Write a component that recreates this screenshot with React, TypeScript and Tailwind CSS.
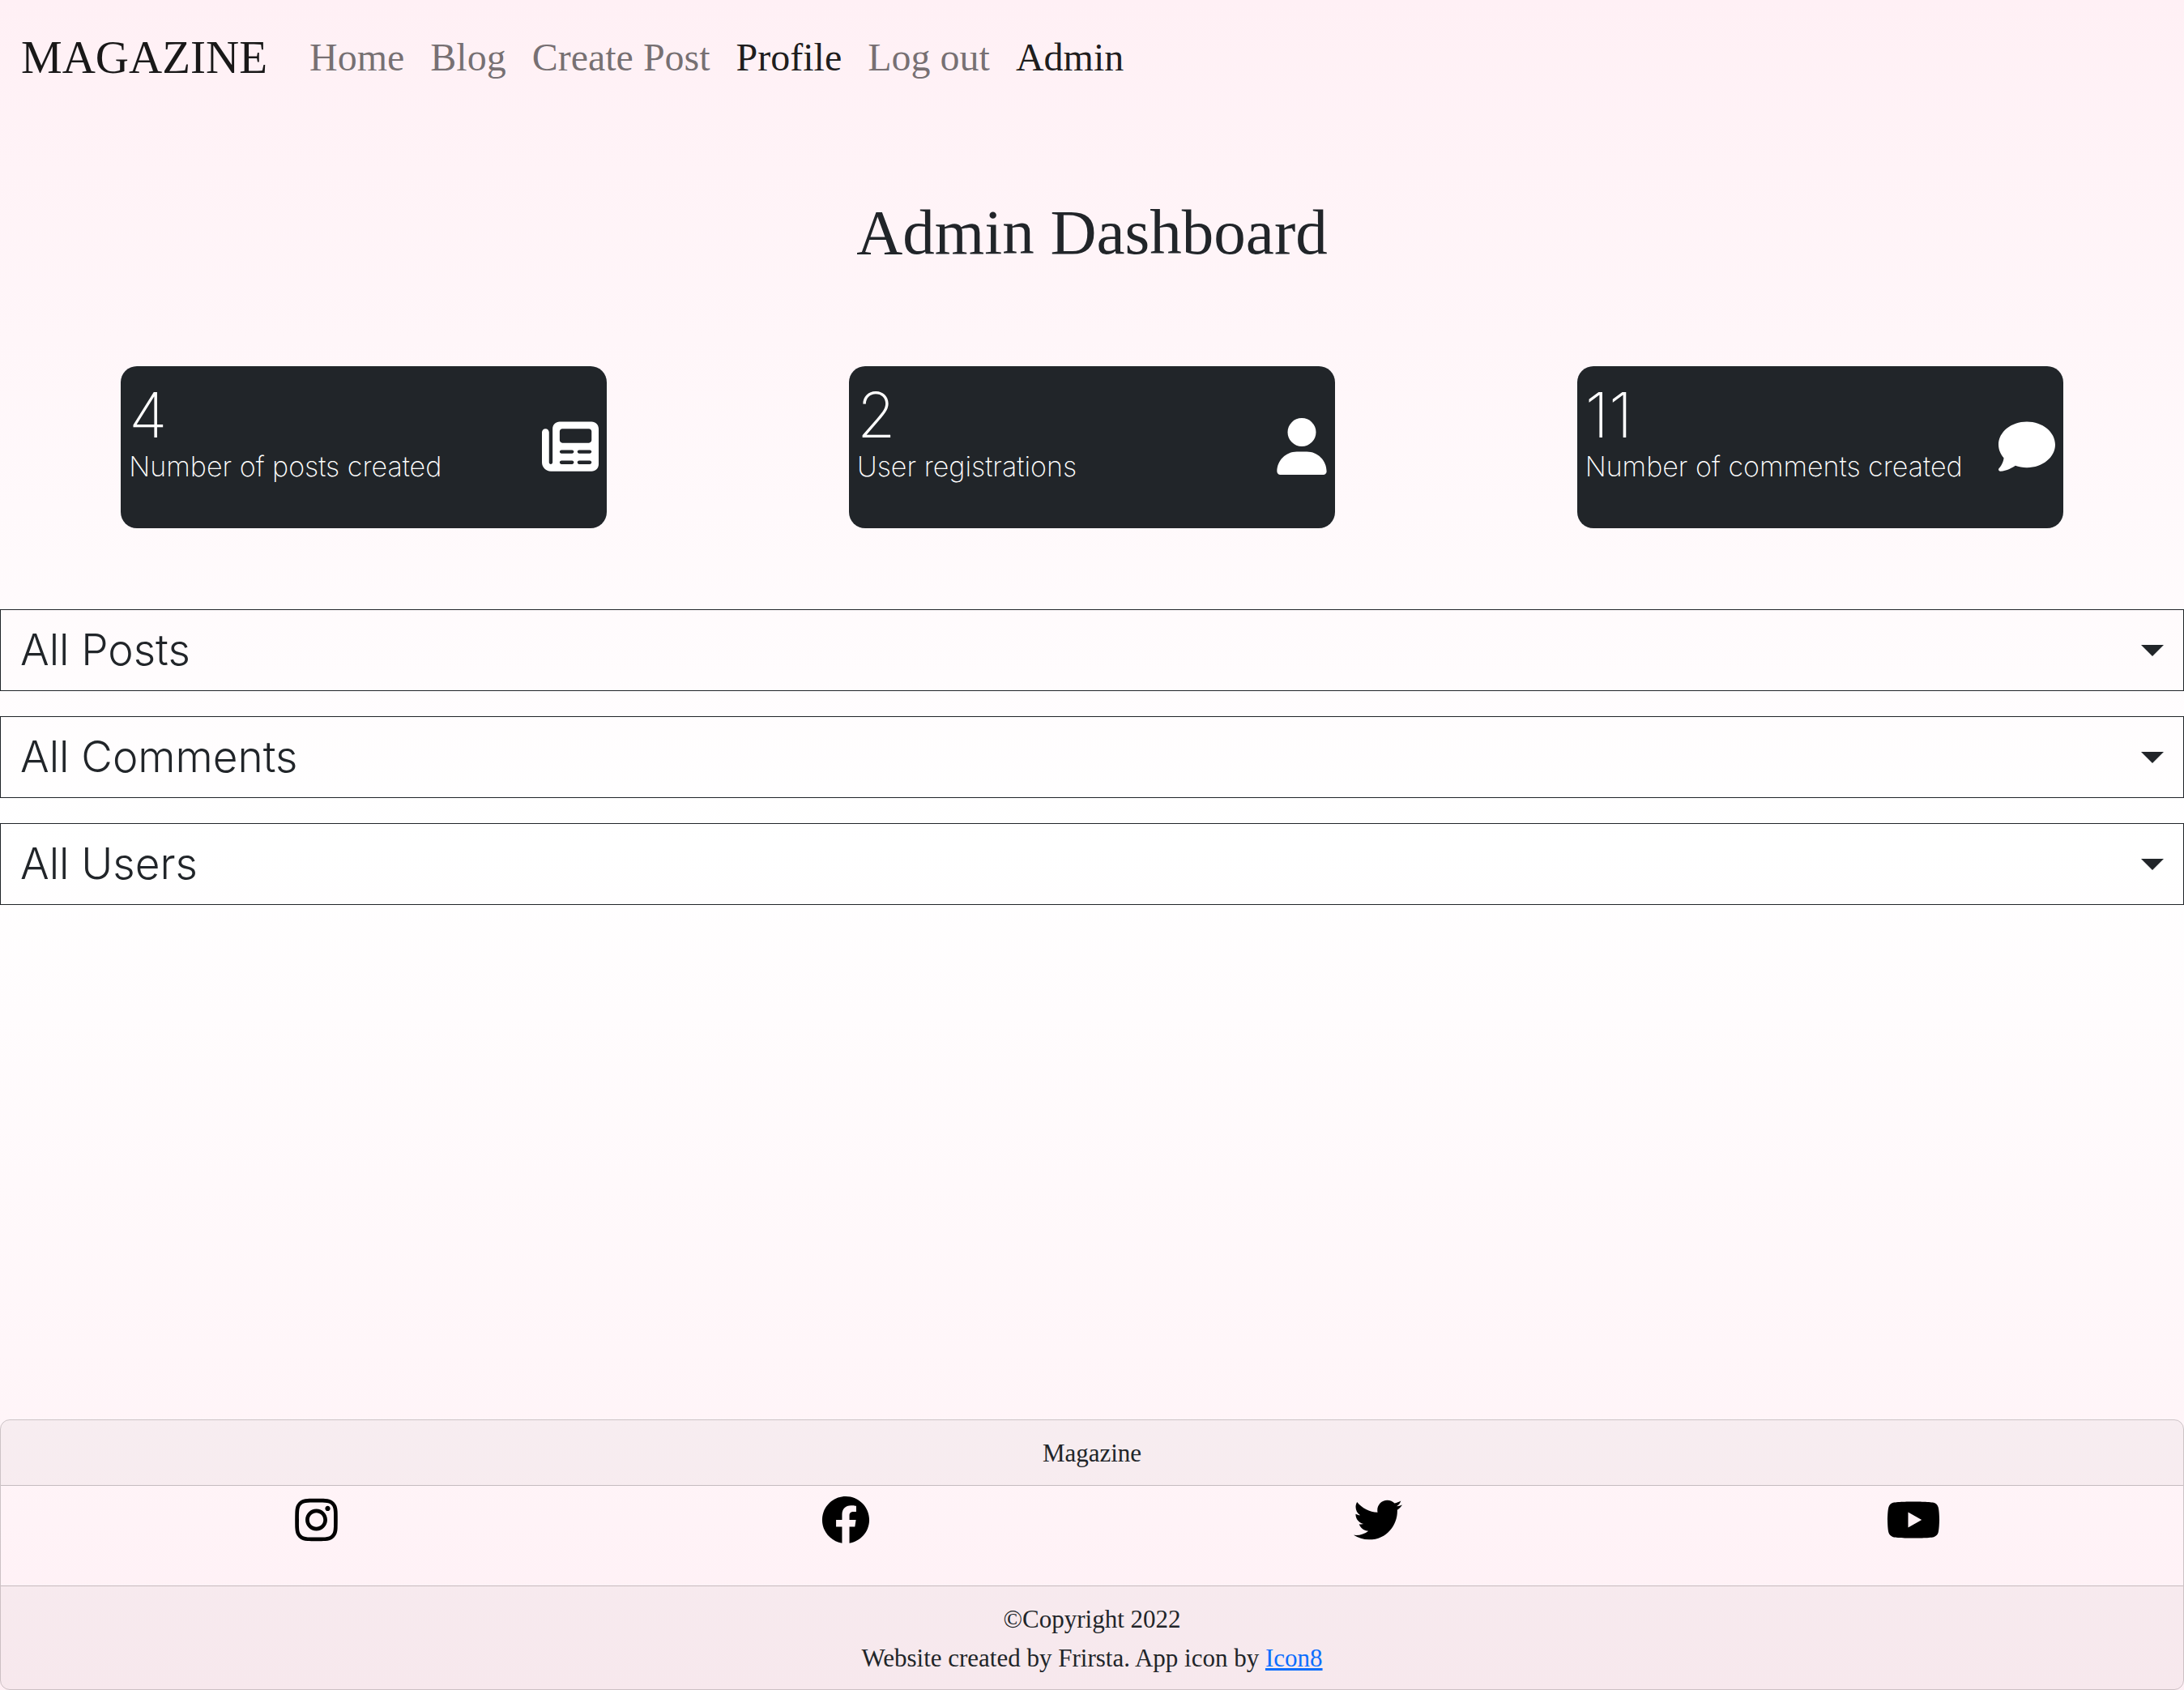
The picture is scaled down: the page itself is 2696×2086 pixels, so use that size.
import type { ReactNode } from "react";
import { FaComment, FaUser } from "react-icons/fa6";
import { FaFacebook, FaInstagram, FaTwitter, FaYoutube } from "react-icons/fa";

const links: { label: string; active?: boolean }[] = [
  { label: "Home" },
  { label: "Blog" },
  { label: "Create Post" },
  { label: "Profile", active: true },
  { label: "Log out" },
  { label: "Admin", active: true },
];

function NewspaperIcon() {
  return (
    <svg viewBox="0 0 512 512" className="h-[70px] w-[70px]" fill="currentColor" aria-hidden="true">
      <path d="M96 96c0-35.3 28.7-64 64-64H448c35.3 0 64 28.7 64 64V416c0 35.3-28.7 64-64 64H80c-44.2 0-80-35.8-80-80V128c0-17.7 14.3-32 32-32s32 14.3 32 32V400c0 8.8 7.2 16 16 16s16-7.2 16-16V96zm64 24v80c0 13.3 10.7 24 24 24H424c13.3 0 24-10.7 24-24V120c0-13.3-10.7-24-24-24H184c-13.3 0-24 10.7-24 24zm0 184c0 8.8 7.2 16 16 16h96c8.8 0 16-7.2 16-16s-7.2-16-16-16H176c-8.8 0-16 7.2-16 16zm160 0c0 8.8 7.2 16 16 16h96c8.8 0 16-7.2 16-16s-7.2-16-16-16H336c-8.8 0-16 7.2-16 16zM160 400c0 8.8 7.2 16 16 16h96c8.8 0 16-7.2 16-16s-7.2-16-16-16H176c-8.8 0-16 7.2-16 16zm160 0c0 8.8 7.2 16 16 16h96c8.8 0 16-7.2 16-16s-7.2-16-16-16H336c-8.8 0-16 7.2-16 16z" />
    </svg>
  );
}

type Stat = { value: number; label: string; icon: ReactNode };

const stats: Stat[] = [
  { value: 4, label: "Number of posts created", icon: <NewspaperIcon /> },
  { value: 2, label: "User registrations", icon: <FaUser className="h-[70px] w-[62px]" aria-hidden="true" /> },
  { value: 11, label: "Number of comments created", icon: <FaComment className="h-[70px] w-[70px]" aria-hidden="true" /> },
];

const sections = ["All Posts", "All Comments", "All Users"];

const socials: { name: string; icon: ReactNode }[] = [
  { name: "Instagram", icon: <FaInstagram className="h-[60px] w-[53px]" /> },
  { name: "Facebook", icon: <FaFacebook className="h-[60px] w-[60px]" /> },
  { name: "Twitter", icon: <FaTwitter className="h-[60px] w-[60px]" /> },
  { name: "YouTube", icon: <FaYoutube className="h-[60px] w-[68px]" /> },
];

function Navbar() {
  return (
    <nav className="flex min-h-[140px] flex-wrap items-center px-[26px] pt-0.5">
      <a href="#" className="mr-[52px] text-[57px] leading-[72px] text-black/90">
        MAGAZINE
      </a>
      <ul className="flex flex-wrap gap-x-8">
        {links.map(({ label, active }) => (
          <li key={label}>
            <a
              href="#"
              className={
                active
                  ? "text-[48px] leading-[72px] text-black/90"
                  : "text-[48px] leading-[72px] text-black/55"
              }
            >
              {label}
            </a>
          </li>
        ))}
      </ul>
    </nav>
  );
}

function StatCard({ value, label, icon }: Stat) {
  return (
    <div className="flex min-h-[200px] w-[600px] items-center justify-between rounded-[20px] bg-[#212529] px-[10px] font-['Inter',sans-serif] text-white">
      <div className="pt-5 pb-[52px]">
        <p className="text-[77px] leading-[80px] font-extralight">{value}</p>
        <p className="text-[34px] leading-[48px] font-extralight">{label}</p>
      </div>
      <div className="mb-0.5 shrink-0">{icon}</div>
    </div>
  );
}

function SectionToggle({ label }: { label: string }) {
  return (
    <button
      type="button"
      aria-expanded="false"
      className="flex w-full items-center justify-between border border-[#212529] px-6 py-4 text-left font-['Inter',sans-serif] text-[53px] leading-[67px] font-light"
    >
      {label}
      <svg viewBox="0 0 28 14" className="h-[14px] w-7" aria-hidden="true">
        <path d="M0 0h28L14 14z" fill="currentColor" />
      </svg>
    </button>
  );
}

function Footer() {
  return (
    <footer className="mt-auto overflow-hidden rounded-xl border border-black/20 text-center text-[31px] leading-[48px]">
      <div className="border-b border-black/20 bg-black/3 pt-[17px] pb-[15px]">Magazine</div>
      <ul className="flex justify-around pt-3 pb-[51px] pl-16 text-black">
        {socials.map(({ name, icon }) => (
          <li key={name}>
            <a href="#" aria-label={name} className="block">
              {icon}
            </a>
          </li>
        ))}
      </ul>
      <div className="border-t border-black/20 bg-black/3 pt-[17px] pb-[14px]">
        <p>©Copyright 2022</p>
        <p>
          Website created by Frirsta. App icon by{" "}
          <a href="#" className="text-[#0d6efd] underline">
            Icon8
          </a>
        </p>
      </div>
    </footer>
  );
}

export default function App() {
  return (
    <div className="flex min-h-screen flex-col bg-[linear-gradient(to_bottom,#fff0f5,#ffffff,#fff0f5)] font-['Liberation_Serif',serif] text-[#212529]">
      <Navbar />
      <main>
        <h1 className="mt-[99px] text-center text-[79px] leading-[96px]">Admin Dashboard</h1>
        <div className="mt-[117px] flex flex-wrap justify-around gap-y-8">
          {stats.map((stat) => (
            <StatCard key={stat.label} {...stat} />
          ))}
        </div>
        <div className="mt-[100px] flex flex-col gap-[31px]">
          {sections.map((label) => (
            <SectionToggle key={label} label={label} />
          ))}
        </div>
      </main>
      <Footer />
    </div>
  );
}
